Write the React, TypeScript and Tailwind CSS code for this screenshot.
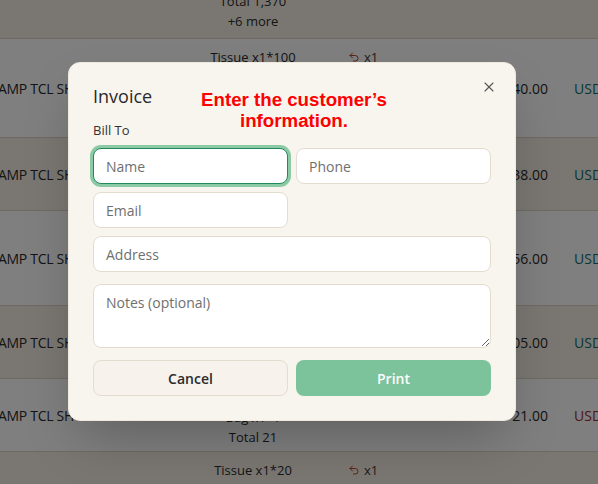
import { Undo2, X } from "lucide-react";

type Row = {
  h: string;
  bg: string;
  name?: string;
  items: string[];
  ret?: boolean;
  amount?: string;
  cur?: string;
  curColor?: string;
  align?: "start" | "end";
};

const rows: Row[] = [
  { h: "h-[39px]", bg: "bg-[#f5efe4]", items: ["Total 1,370", "+6 more"], align: "end" },
  {
    h: "h-[99px]",
    bg: "bg-white",
    name: "AMP TCL SHOP",
    items: ["Tissue x1*100", "Water x2*12", "Soap x1*8", "Total 140"],
    ret: true,
    amount: "140.00",
    cur: "USD",
    curColor: "text-[#0f6f6a]",
  },
  {
    h: "h-[73px]",
    bg: "bg-[#f5efe4]",
    name: "AMP TCL SHOP",
    items: ["Tissue x1*30", "Cup x1*8", "Total 38"],
    amount: "38.00",
    cur: "USD",
    curColor: "text-[#0f6f6a] pl-[7px]",
  },
  {
    h: "h-[95px]",
    bg: "bg-white",
    name: "AMP TCL SHOP",
    items: ["Tissue x1*40", "Oil x1*16", "Total 56", "+1 more"],
    amount: "56.00",
    cur: "USD",
    curColor: "text-[#0f6f6a] pl-[2px]",
  },
  {
    h: "h-[73px]",
    bg: "bg-[#f5efe4]",
    name: "AMP TCL SHOP",
    items: ["Rice x1*100", "Salt x1*5", "Total 105"],
    amount: "105.00",
    cur: "USD",
    curColor: "text-[#0f6f6a] pl-[2px]",
  },
  {
    h: "h-[73px]",
    bg: "bg-white",
    name: "AMP TCL SHOP",
    items: ["Tissue x1*20", "Bag x1*1", "Total 21"],
    amount: "21.00",
    cur: "USD",
    curColor: "text-[#9b2c2c]",
  },
  { h: "h-[40px]", bg: "bg-[#f5efe4]", items: ["Tissue x1*20"], ret: true },
];

function TableRow({ row }: { row: Row }) {
  return (
    <div className={`flex ${row.h} ${row.bg} items-center border-b border-[#dcd4c6] text-[14px] text-[#2a2a2a]`}>
      <div className="w-[180px] shrink-0 -ml-[2px] whitespace-nowrap tracking-[-0.3px]">{row.name}</div>
      <div
        className={`flex h-full w-[150px] shrink-0 flex-col items-center text-[13px] leading-5 ${
          row.align === "end" ? "justify-end pb-[7px]" : "justify-start pt-2"
        }`}
      >
        {row.items.map((t) => (
          <span key={t} className="whitespace-nowrap">
            {t}
          </span>
        ))}
      </div>
      <div className="flex h-full w-[60px] shrink-0 items-start pl-5 pt-2 text-[13px] leading-5">
        {row.ret && (
          <span className="flex items-center gap-1 text-[#b5452c]">
            <Undo2 className="size-3" strokeWidth={2} />
            <span className="text-[#3a3a3a]">x1</span>
          </span>
        )}
      </div>
      <div className="w-[160px] shrink-0 text-right">{row.amount}</div>
      <div className={`pl-[26px] whitespace-nowrap ${row.curColor ?? ""}`}>{row.cur}</div>
    </div>
  );
}

const baseInput =
  "h-9 w-full rounded-lg border bg-white px-3 text-[14px] text-[#2a2a2a] placeholder:text-[#6f6f6f] outline-none";
const inputCls = `${baseInput} border-[#e4dccf]`;

export default function App() {
  return (
    <div className="relative h-[484px] w-[598px] overflow-hidden font-['Open_Sans',sans-serif]">
      <div className="flex flex-col">
        {rows.map((r, i) => (
          <TableRow key={i} row={r} />
        ))}
      </div>

      <div className="absolute inset-0 bg-black/50">
        <div className="relative ml-[68px] mt-[62px] w-[448px] rounded-xl border border-[#eee8dd] bg-[#f8f5ef] px-6 pb-6 pt-[19px] shadow-2xl">
          <button className="absolute right-[18px] top-[16px] text-[#555]">
            <X className="size-4" strokeWidth={1.6} />
          </button>
          <h2 className="text-[18px] leading-7 text-[#2a2a2a]">Invoice</h2>
          <p className="mt-[10px] text-[13px] font-medium leading-5 text-[#333]">Bill To</p>
          <div className="mt-[8px] grid grid-cols-2 gap-2">
            <input
              className={`${baseInput} border-[1.5px] border-[#24895a] ring-[3px] ring-[#8ccaa5]`}
              placeholder="Name"
              readOnly
            />
            <input className={inputCls} placeholder="Phone" readOnly />
            <input className={inputCls} placeholder="Email" readOnly />
            <div />
            <input className={`${inputCls} col-span-2`} placeholder="Address" readOnly />
          </div>
          <textarea
            className="mt-3 block h-16 w-full rounded-lg border border-[#e4dccf] bg-white px-3 py-2 text-[14px] leading-5 placeholder:text-[#6f6f6f] outline-none"
            placeholder="Notes (optional)"
            readOnly
          />
          <div className="mt-3 grid grid-cols-2 gap-2">
            <button className="h-9 rounded-lg border border-[#e4dccf] bg-[#f7f3ec] text-[14px] font-semibold text-[#2a2a2a]">
              Cancel
            </button>
            <button className="h-9 rounded-lg bg-[#7cc29b] text-[14px] font-semibold text-white">Print</button>
          </div>
        </div>
      </div>

      <p className="absolute left-[189px] top-[89px] w-[210px] text-center font-['Liberation_Sans',Arial,sans-serif] text-[18.7px] font-bold leading-[21px] text-[#ff0000]">
        Enter the customer’s information.
      </p>
    </div>
  );
}
